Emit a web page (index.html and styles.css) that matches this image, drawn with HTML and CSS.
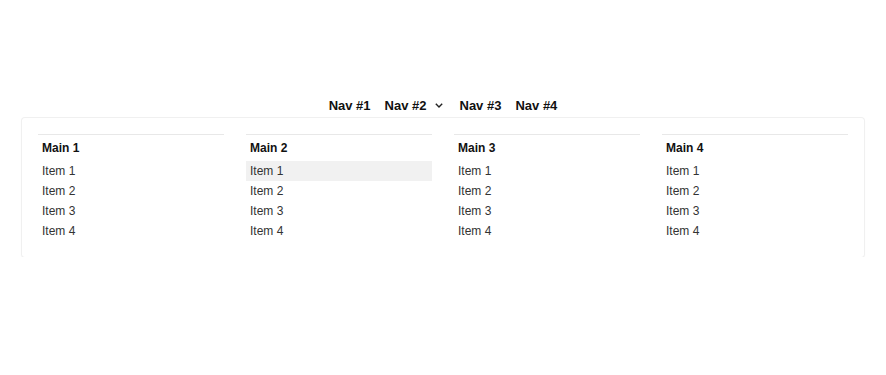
FILE: index.html
```html
<!DOCTYPE html>
<html lang="en">
<head>
  <meta charset="UTF-8">
  <title>Mega Menu</title>
  <link rel="stylesheet" href="styles.css">
</head>
<body>
  <div class="menu">
    <ul class="nav">
      <li class="nav-item">Nav #1</li>
      <li class="nav-item">Nav #2
        <svg class="chevron" width="8" height="5" viewBox="0 0 8 5"><polyline points="0.8,0.8 4,4 7.2,0.8" fill="none" stroke="#222" stroke-width="1.4"/></svg>
      </li>
      <li class="nav-item">Nav #3</li>
      <li class="nav-item">Nav #4</li>
    </ul>
    <div class="panel">
      <div class="column">
        <div class="column-title">Main 1</div>
        <div class="item">Item 1</div>
        <div class="item">Item 2</div>
        <div class="item">Item 3</div>
        <div class="item">Item 4</div>
      </div>
      <div class="column">
        <div class="column-title">Main 2</div>
        <div class="item active">Item 1</div>
        <div class="item">Item 2</div>
        <div class="item">Item 3</div>
        <div class="item">Item 4</div>
      </div>
      <div class="column">
        <div class="column-title">Main 3</div>
        <div class="item">Item 1</div>
        <div class="item">Item 2</div>
        <div class="item">Item 3</div>
        <div class="item">Item 4</div>
      </div>
      <div class="column">
        <div class="column-title">Main 4</div>
        <div class="item">Item 1</div>
        <div class="item">Item 2</div>
        <div class="item">Item 3</div>
        <div class="item">Item 4</div>
      </div>
    </div>
  </div>
</body>
</html>
```

FILE: styles.css
```css
body {
  margin: 0;
  background-color: #fff;
  font-family: "Liberation Sans", Arial, sans-serif;
  color: #222;
}
.menu {
  padding: 92px 22px 0;
}
.nav {
  display: flex;
  justify-content: center;
  list-style: none;
  margin: 0;
  padding: 0;
}
.nav-item {
  display: flex;
  align-items: center;
  gap: 8px;
  height: 26px;
  padding: 0 7px;
  font-size: 13px;
  font-weight: bold;
  color: #111;
}
.chevron {
  display: block;
  margin-right: 3px;
}
.panel {
  display: grid;
  grid-template-columns: repeat(4, 1fr);
  gap: 22px;
  padding: 16px;
  border-radius: 3px;
  box-shadow: 0 0 0 1px #f0f0f0, 0 1px 3px rgba(0, 0, 0, 0.04);
}
.column {
  border-top: 1px solid #e8e8e8;
}
.column-title {
  padding: 6px 4px;
  line-height: 14px;
  font-size: 12px;
  font-weight: bold;
  color: #111;
}
.item {
  padding: 0 4px;
  line-height: 20px;
  font-size: 12px;
  color: #333;
}
.item.active {
  background-color: #f1f1f1;
}
```
